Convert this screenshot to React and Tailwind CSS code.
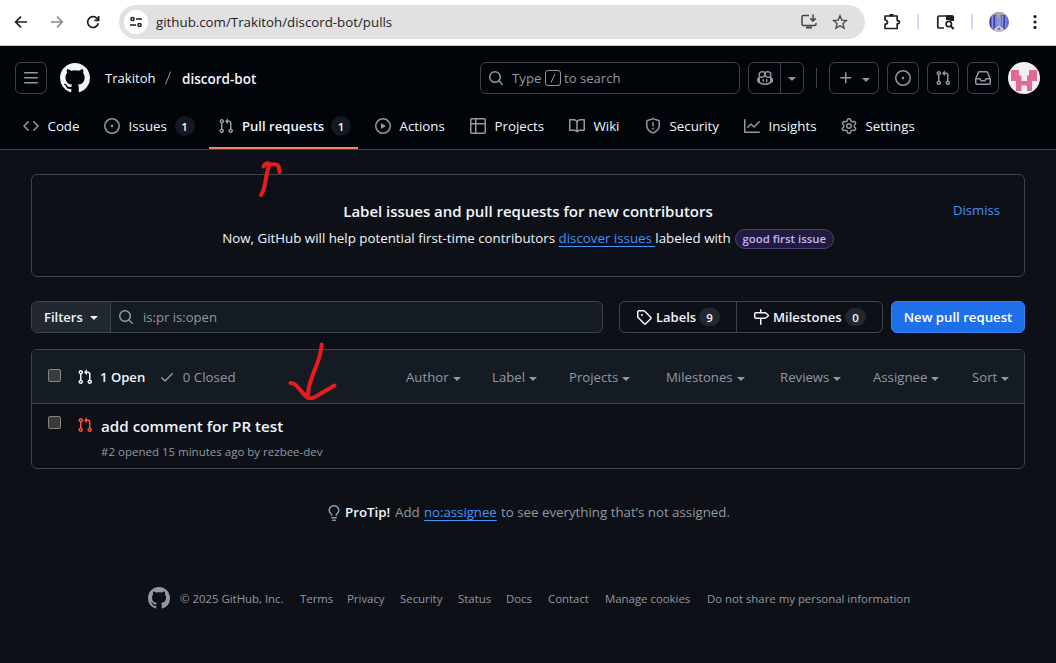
const ICONS = {
  bars: "M1 2.75A.75.75 0 0 1 1.75 2h12.5a.75.75 0 0 1 0 1.5H1.75A.75.75 0 0 1 1 2.75Zm0 5A.75.75 0 0 1 1.75 7h12.5a.75.75 0 0 1 0 1.5H1.75A.75.75 0 0 1 1 7.75ZM1.75 12h12.5a.75.75 0 0 1 0 1.5H1.75a.75.75 0 0 1 0-1.5Z",
  github: "M8 0c4.42 0 8 3.58 8 8a8.013 8.013 0 0 1-5.45 7.59c-.4.08-.55-.17-.55-.38 0-.27.01-1.13.01-2.2 0-.75-.25-1.23-.54-1.48 1.78-.2 3.65-.88 3.65-3.95 0-.88-.31-1.59-.82-2.15.08-.2.36-1.02-.08-2.12 0 0-.67-.22-2.2.82-.64-.18-1.32-.27-2-.27-.68 0-1.36.09-2 .27-1.53-1.03-2.2-.82-2.2-.82-.44 1.1-.16 1.92-.08 2.12-.51.56-.82 1.28-.82 2.15 0 3.06 1.86 3.75 3.64 3.95-.23.2-.44.55-.51 1.07-.46.21-1.61.55-2.33-.66-.15-.24-.6-.83-1.23-.82-.67.01-.27.38.01.53.34.19.73.9.82 1.13.16.45.68 1.31 2.69.94 0 .67.01 1.3.01 1.49 0 .21-.15.45-.55.38A7.995 7.995 0 0 1 0 8c0-4.42 3.58-8 8-8Z",
  code: "m11.28 3.22 4.25 4.25a.75.75 0 0 1 0 1.06l-4.25 4.25a.749.749 0 0 1-1.275-.326.749.749 0 0 1 .215-.734L13.94 8l-3.72-3.72a.749.749 0 0 1 .326-1.275.749.749 0 0 1 .734.215Zm-6.56 0a.751.751 0 0 1 1.042.018.751.751 0 0 1 .018 1.042L2.06 8l3.72 3.72a.749.749 0 0 1-.326 1.275.749.749 0 0 1-.734-.215L.47 8.53a.75.75 0 0 1 0-1.06Z",
  issue: "M8 9.3a1.3 1.3 0 1 0 0-2.6 1.3 1.3 0 0 0 0 2.6Z M8 0a8 8 0 1 1 0 16A8 8 0 0 1 8 0ZM1.5 8a6.5 6.5 0 1 0 13 0 6.5 6.5 0 0 0-13 0Z",
  pr: "M1.5 3.25a2.25 2.25 0 1 1 3 2.122v5.256a2.251 2.251 0 1 1-1.5 0V5.372A2.25 2.25 0 0 1 1.5 3.25Zm5.677-.177L9.573.677A.25.25 0 0 1 10 .854V2.5h1A2.5 2.5 0 0 1 13.5 5v5.628a2.251 2.251 0 1 1-1.5 0V5a1 1 0 0 0-1-1h-1v1.646a.25.25 0 0 1-.427.177L7.177 3.427a.25.25 0 0 1 0-.354ZM3.75 2.5a.75.75 0 1 0 0 1.5.75.75 0 0 0 0-1.5Zm0 9.5a.75.75 0 1 0 0 1.5.75.75 0 0 0 0-1.5Zm8.25.75a.75.75 0 1 0 1.5 0 .75.75 0 0 0-1.5 0Z",
  play: "M8 0a8 8 0 1 1 0 16A8 8 0 0 1 8 0ZM1.5 8a6.5 6.5 0 1 0 13 0 6.5 6.5 0 0 0-13 0Zm4.879-2.773 4.264 2.559a.25.25 0 0 1 0 .428l-4.264 2.559A.25.25 0 0 1 6 10.559V5.442a.25.25 0 0 1 .379-.215Z",
  table: "M0 1.75C0 .784.784 0 1.75 0h12.5C15.216 0 16 .784 16 1.75v12.5A1.75 1.75 0 0 1 14.25 16H1.75A1.75 1.75 0 0 1 0 14.25ZM6.5 6.5v8h7.75a.25.25 0 0 0 .25-.25V6.5Zm8-1.5V1.75a.25.25 0 0 0-.25-.25H6.5V5Zm-13 1.5v7.75c0 .138.112.25.25.25H5v-8ZM5 5V1.5H1.75a.25.25 0 0 0-.25.25V5Z",
  book: "M0 1.75A.75.75 0 0 1 .75 1h4.253c1.227 0 2.317.59 3 1.501A3.743 3.743 0 0 1 11.006 1h4.245a.75.75 0 0 1 .75.75v10.5a.75.75 0 0 1-.75.75h-4.507a2.25 2.25 0 0 0-1.591.659l-.622.621a.75.75 0 0 1-1.06 0l-.622-.621A2.25 2.25 0 0 0 5.258 13H.75a.75.75 0 0 1-.75-.75Zm7.251 10.324.004-5.073-.002-2.253A2.25 2.25 0 0 0 5.003 2.5H1.5v9h3.757a3.75 3.75 0 0 1 1.994.574ZM8.755 4.75l-.004 7.322a3.752 3.752 0 0 1 1.992-.572H14.5v-9h-3.495a2.25 2.25 0 0 0-2.25 2.25Z",
  shield: "M7.467.133a1.748 1.748 0 0 1 1.066 0l5.25 1.68A1.75 1.75 0 0 1 15 3.48V7c0 1.566-.32 3.182-1.303 4.682-.983 1.498-2.585 2.813-5.032 3.855a1.697 1.697 0 0 1-1.33 0c-2.447-1.042-4.049-2.357-5.032-3.855C1.32 10.182 1 8.566 1 7V3.48a1.75 1.75 0 0 1 1.217-1.667Zm.61 1.429a.25.25 0 0 0-.153 0l-5.25 1.68a.25.25 0 0 0-.174.238V7c0 1.358.275 2.666 1.057 3.86.784 1.194 2.121 2.34 4.366 3.297a.196.196 0 0 0 .154 0c2.245-.956 3.582-2.104 4.366-3.298C13.225 9.666 13.5 8.36 13.5 7V3.48a.251.251 0 0 0-.174-.237l-5.25-1.68ZM8.75 4.75v3a.75.75 0 0 1-1.5 0v-3a.75.75 0 0 1 1.5 0ZM9 10.5a1 1 0 1 1-2 0 1 1 0 0 1 2 0Z",
  graph: "M1.5 1.75V13.5h13.75a.75.75 0 0 1 0 1.5H.75a.75.75 0 0 1-.75-.75V1.75a.75.75 0 0 1 1.5 0Zm14.28 2.53-5.25 5.25a.75.75 0 0 1-1.06 0L7 7.06 4.28 9.78a.751.751 0 0 1-1.042-.018.751.751 0 0 1-.018-1.042l3.25-3.25a.75.75 0 0 1 1.06 0L10 7.94l4.72-4.72a.751.751 0 0 1 1.042.018.751.751 0 0 1 .018 1.042Z",
  gear: "M8 0a8.2 8.2 0 0 1 .701.031C9.444.095 9.99.645 10.16 1.29l.288 1.107c.018.066.079.158.212.224.231.114.454.243.668.386.123.082.233.09.299.071l1.103-.303c.644-.176 1.392.021 1.82.63.27.385.506.792.704 1.218.315.675.111 1.422-.364 1.891l-.814.806c-.049.048-.098.147-.088.294.016.257.016.515 0 .772-.01.147.038.246.088.294l.814.806c.475.469.679 1.216.364 1.891a7.977 7.977 0 0 1-.704 1.217c-.428.61-1.176.807-1.82.63l-1.102-.302c-.067-.019-.177-.011-.3.071a5.909 5.909 0 0 1-.668.386c-.133.066-.194.158-.211.224l-.29 1.106c-.168.646-.715 1.196-1.458 1.26a8.006 8.006 0 0 1-1.402 0c-.743-.064-1.289-.614-1.458-1.26l-.289-1.106c-.018-.066-.079-.158-.212-.224a5.738 5.738 0 0 1-.668-.386c-.123-.082-.233-.09-.299-.071l-1.103.303c-.644.176-1.392-.021-1.82-.63a8.12 8.12 0 0 1-.704-1.218c-.315-.675-.111-1.422.363-1.891l.815-.806c.05-.048.098-.147.088-.294a6.214 6.214 0 0 1 0-.772c.01-.147-.038-.246-.088-.294l-.815-.806C.635 6.045.431 5.298.746 4.623a7.92 7.92 0 0 1 .704-1.217c.428-.61 1.176-.807 1.82-.63l1.102.302c.067.019.177.011.3-.071.214-.143.437-.272.668-.386.133-.066.194-.158.211-.224l.29-1.106C6.009.645 6.556.095 7.299.03 7.53.01 7.764 0 8 0Zm-.571 1.525c-.036.003-.108.036-.137.146l-.289 1.105c-.147.561-.549.967-.998 1.189-.173.086-.34.183-.5.29-.417.278-.97.423-1.529.27l-1.103-.303c-.109-.03-.175.016-.195.045-.22.312-.412.644-.573.99-.014.031-.021.11.059.19l.815.806c.411.406.562.957.53 1.456a4.709 4.709 0 0 0 0 .582c.032.499-.119 1.05-.53 1.456l-.815.806c-.081.08-.073.159-.059.19.162.346.353.677.573.989.02.03.085.076.195.046l1.102-.303c.56-.153 1.113-.008 1.53.27.161.107.328.204.501.29.447.222.85.629.997 1.189l.289 1.105c.029.109.101.143.137.146a6.6 6.6 0 0 0 1.142 0c.036-.003.108-.036.137-.146l.289-1.105c.147-.561.549-.967.998-1.189.173-.086.34-.183.5-.29.417-.278.97-.423 1.529-.27l1.103.303c.109.029.175-.016.195-.045.22-.313.411-.644.573-.99.014-.031.021-.11-.059-.19l-.815-.806c-.411-.406-.562-.957-.53-1.456a4.709 4.709 0 0 0 0-.582c-.032-.499.119-1.05.53-1.456l.815-.806c.081-.08.073-.159.059-.19a6.464 6.464 0 0 0-.573-.989c-.02-.03-.085-.076-.195-.046l-1.102.303c-.56.153-1.113.008-1.53-.27a4.44 4.44 0 0 0-.501-.29c-.447-.222-.85-.629-.997-1.189l-.289-1.105c-.029-.11-.101-.143-.137-.146a6.6 6.6 0 0 0-1.142 0ZM11 8a3 3 0 1 1-6 0 3 3 0 0 1 6 0ZM9.5 8a1.5 1.5 0 1 0-3.001.001A1.5 1.5 0 0 0 9.5 8Z",
  inbox: "M2.8 2.06A1.75 1.75 0 0 1 4.41 1h7.18c.7 0 1.333.417 1.61 1.06l2.74 6.395c.04.093.06.194.06.295v4.5A1.75 1.75 0 0 1 14.25 15H1.75A1.75 1.75 0 0 1 0 13.25v-4.5c0-.101.02-.202.06-.295Zm1.61.44a.25.25 0 0 0-.23.152L1.887 8H4.75a.75.75 0 0 1 .6.3L6.625 10h2.75l1.275-1.7a.75.75 0 0 1 .6-.3h2.863L11.82 2.652a.25.25 0 0 0-.23-.152Zm10.09 7h-2.875l-1.275 1.7a.75.75 0 0 1-.6.3h-3.5a.75.75 0 0 1-.6-.3L4.375 9.5H1.5v3.75c0 .138.112.25.25.25h12.5a.25.25 0 0 0 .25-.25Z",
  search: "M10.68 11.74a6 6 0 0 1-7.922-8.982 6 6 0 0 1 8.982 7.922l3.04 3.04a.749.749 0 0 1-.326 1.275.749.749 0 0 1-.734-.215ZM11.5 7a4.499 4.499 0 1 0-8.997 0A4.499 4.499 0 0 0 11.5 7Z",
  plus: "M7.75 2a.75.75 0 0 1 .75.75V7h4.25a.75.75 0 0 1 0 1.5H8.5v4.25a.75.75 0 0 1-1.5 0V8.5H2.75a.75.75 0 0 1 0-1.5H7V2.75A.75.75 0 0 1 7.75 2Z",
  down: "m4.427 7.427 3.396 3.396a.25.25 0 0 0 .354 0l3.396-3.396A.25.25 0 0 0 11.396 7H4.604a.25.25 0 0 0-.177.427Z",
  tag: "M1 7.775V2.75C1 1.784 1.784 1 2.75 1h5.025c.464 0 .91.184 1.238.513l6.25 6.25a1.75 1.75 0 0 1 0 2.474l-5.026 5.026a1.75 1.75 0 0 1-2.474 0l-6.25-6.25A1.752 1.752 0 0 1 1 7.775Zm1.5 0c0 .066.026.13.073.177l6.25 6.25a.25.25 0 0 0 .354 0l5.025-5.025a.25.25 0 0 0 0-.354l-6.25-6.25a.25.25 0 0 0-.177-.073H2.75a.25.25 0 0 0-.25.25ZM6 5a1 1 0 1 1 0 2 1 1 0 0 1 0-2Z",
  milestone: "M7.75 0a.75.75 0 0 1 .75.75V3h3.634c.414 0 .814.147 1.13.414l2.07 1.75a1.75 1.75 0 0 1 0 2.672l-2.07 1.75a1.75 1.75 0 0 1-1.13.414H8.5v5.25a.75.75 0 0 1-1.5 0V10H2.75A1.75 1.75 0 0 1 1 8.25v-3.5C1 3.784 1.784 3 2.75 3H7V.75A.75.75 0 0 1 7.75 0Zm4.384 8.5a.25.25 0 0 0 .161-.06l2.07-1.75a.248.248 0 0 0 0-.38l-2.07-1.75a.25.25 0 0 0-.161-.06H2.75a.25.25 0 0 0-.25.25v3.5c0 .138.112.25.25.25h9.384Z",
  check: "M13.78 4.22a.75.75 0 0 1 0 1.06l-7.25 7.25a.75.75 0 0 1-1.06 0L2.22 9.28a.751.751 0 0 1 .018-1.042.751.751 0 0 1 1.042-.018L6 10.94l6.72-6.72a.75.75 0 0 1 1.06 0Z",
  bulb: "M8 1.5c-2.363 0-4 1.69-4 3.75 0 .984.424 1.625.984 2.304l.214.253c.223.264.47.556.673.848.284.411.537.896.621 1.49a.75.75 0 0 1-1.484.211c-.04-.282-.163-.547-.37-.847a8.456 8.456 0 0 0-.542-.68c-.084-.1-.173-.205-.268-.32C3.201 7.75 2.5 6.766 2.5 5.25 2.5 2.31 4.863 0 8 0s5.5 2.31 5.5 5.25c0 1.516-.701 2.5-1.328 3.259-.095.115-.184.22-.268.319-.207.245-.383.453-.541.681-.208.3-.33.565-.37.847a.751.751 0 0 1-1.485-.212c.084-.593.337-1.078.621-1.489.203-.292.45-.584.673-.848.075-.088.147-.173.213-.253.561-.679.985-1.32.985-2.304 0-2.06-1.637-3.75-4-3.75ZM5.75 12h4.5a.75.75 0 0 1 0 1.5h-4.5a.75.75 0 0 1 0-1.5ZM6 15.25a.75.75 0 0 1 .75-.75h2.5a.75.75 0 0 1 0 1.5h-2.5a.75.75 0 0 1-.75-.75Z",
  copilot: "M7.998 15.035c-4.562 0-7.873-2.914-7.998-3.749V9.338c.085-.628.677-1.686 1.588-2.065.013-.07.024-.143.036-.218.029-.183.06-.384.126-.612-.201-.508-.254-1.084-.254-1.656 0-.87.128-1.769.693-2.484.579-.733 1.494-1.124 2.724-1.261 1.206-.134 2.262.034 2.944.765.05.053.096.108.139.165.044-.057.094-.112.143-.165.682-.731 1.738-.899 2.944-.765 1.23.137 2.145.528 2.724 1.261.566.715.693 1.614.693 2.484 0 .572-.053 1.148-.254 1.656.066.228.098.429.126.612.012.076.024.148.037.218.924.385 1.522 1.471 1.591 2.095v1.872c0 .766-3.351 3.795-8.002 3.795Zm0-1.485c2.28 0 4.584-1.11 5.002-1.433V7.862l-.023-.116c-.49.21-1.075.291-1.727.291-1.146 0-2.059-.327-2.71-.991A3.222 3.222 0 0 1 8 6.303a3.24 3.24 0 0 1-.544.743c-.65.664-1.563.991-2.71.991-.652 0-1.236-.081-1.727-.291l-.023.116v4.255c.419.323 2.722 1.433 5.002 1.433ZM6.762 2.83c-.193-.206-.637-.413-1.682-.297-1.019.113-1.479.404-1.713.7-.247.312-.369.789-.369 1.554 0 .793.129 1.171.308 1.371.162.181.519.379 1.442.379.853 0 1.339-.235 1.638-.54.315-.322.527-.827.617-1.553.117-.935-.037-1.395-.241-1.614Zm4.155-.297c-1.044-.116-1.488.091-1.681.297-.204.219-.359.679-.242 1.614.091.726.303 1.231.618 1.553.299.305.784.54 1.638.54.922 0 1.28-.198 1.442-.379.179-.2.308-.578.308-1.371 0-.765-.123-1.242-.37-1.554-.233-.296-.693-.587-1.713-.7Z M6.25 9.037a.75.75 0 0 1 .75.75v1.501a.75.75 0 0 1-1.5 0V9.787a.75.75 0 0 1 .75-.75Zm4.25.75v1.501a.75.75 0 0 1-1.5 0V9.787a.75.75 0 0 1 1.5 0Z",
};

function Icon({ name, className = "size-4" }) {
  return (
    <svg viewBox="0 0 16 16" fill="currentColor" className={`shrink-0 ${className}`}>
      <path d={ICONS[name]} />
    </svg>
  );
}

function Line({ children, className = "", viewBox = "0 0 16 16" }) {
  return (
    <svg viewBox={viewBox} fill="none" stroke="currentColor" className={`shrink-0 ${className}`}>
      {children}
    </svg>
  );
}

function BrowserBar() {
  return (
    <div className="flex h-[46px] items-center border-b border-[#c9c9c9] bg-white pb-px text-[#1f1f1f]">
      <Line className="ml-[13px] size-4">
        <path strokeWidth="1.7" d="M14 8H2.6M8 2.6 2.6 8 8 13.4" />
      </Line>
      <Line className="ml-5 size-4 text-[#8a8a8a]">
        <path strokeWidth="1.5" d="M2 8h11.4M8 2.6 13.4 8 8 13.4" />
      </Line>
      <Line className="ml-5 size-4">
        <path strokeWidth="1.7" d="M13.3 9.2A5.4 5.4 0 1 1 12 4.4L13.5 6" />
        <path strokeWidth="1.7" d="M13.6 2v4.3H9.4" />
      </Line>
      <div className="ml-[18px] flex h-[34px] w-[746px] items-center rounded-full bg-[#e1e1e1] pl-[5px]">
        <div className="flex size-6 items-center justify-center rounded-full bg-white">
          <Line className="size-3.5" viewBox="0 0 14 14">
            <circle cx="3.5" cy="4" r="1.6" strokeWidth="1.5" />
            <circle cx="10.5" cy="10" r="1.6" strokeWidth="1.5" />
            <path strokeWidth="1.5" d="M7 4h6M1 10h6" />
          </Line>
        </div>
        <span className="ml-2 w-[644px] whitespace-nowrap pt-0.5 text-[13.300px]">github.com/Trakitoh/discord-bot/pulls</span>
        <Line className="size-[18px] text-[#444]" viewBox="0 0 18 18">
          <path strokeWidth="1.5" d="M9 2.5H3.3q-1.300 0-1.300 1.300v7.400q0 1.300 1.300 1.300h11.400q1.300 0 1.300-1.300V10M13 1.5v6.4M10.3 5.4 13 8l2.7-2.6" />
          <path strokeWidth="2" d="M6 14.5h6" />
        </Line>
        <Line className="ml-[14px] size-4 text-[#444]">
          <path strokeWidth="1.3" d="m8 1.8 1.8 4.3 4.7.4-3.6 3.1 1.1 4.6L8 11.7l-4 2.5 1.1-4.6L1.5 6.5l4.7-.4z" />
        </Line>
      </div>
      <Line className="ml-[17px] size-5" viewBox="0 0 20 20">
        <path strokeWidth="1.7" strokeLinejoin="round" d="M3 4h12.2v4.6q2.200 0 2.200 1.600t-2.200 1.600v4.700H3v-4.100q2.500-.5 2.500-2.200T3 8Z" />
        <path strokeWidth="2.4" d="M7.5 3.200h4" />
      </Line>
      <div className="ml-[15px] h-4 w-0.5 rounded bg-[#e2d0fb]" />
      <Line className="ml-4 size-5" viewBox="0 0 20 20">
        <path strokeWidth="1.7" d="M9 16H4.2Q2.8 16 2.8 14.6V5.4Q2.8 4 4.2 4h12.600q1.400 0 1.400 1.300V9" />
        <path fill="currentColor" strokeWidth="0" d="M11 3.200h6q2 0 2 2V9h-3l-2-1h-3Z" />
        <circle cx="13.8" cy="12" r="2.7" strokeWidth="1.7" />
        <path strokeWidth="1.9" d="m15.700 14 3 3" />
      </Line>
      <div className="ml-[16px] h-4 w-0.5 rounded bg-[#e2d0fb]" />
      <svg viewBox="0 0 20 20" className="ml-4 size-5 shrink-0">
        <clipPath id="profile"><circle cx="10" cy="10" r="10" /></clipPath>
        <g clipPath="url(#profile)">
          <path fill="#6a66c4" d="M0 0h20v20H0z" />
          <path stroke="#8f92f0" strokeWidth="1.2" d="M3.500 3v13M7 4v10M13.500 4v10M17 3v13" />
          <path stroke="#403d8c" strokeWidth="1.2" d="M5.200 2v14M15.200 2v14M1.500 5v11" />
          <path fill="#a4a5c4" d="M3 0h14v3H3z" />
          <path fill="#7f9be0" d="M8 6h4v7H8z" />
          <path fill="#b9b83c" d="M8 1h3.500v5H8z" />
          <path fill="#c8c8dc" d="m4 20 2-4 4-3 4 3 2 4z" />
          <path fill="#77799a" d="m8 18 2-3 2 3z" />
        </g>
      </svg>
      <svg viewBox="0 0 4 16" className="ml-6 h-4 w-1" fill="currentColor">
        <circle cx="2" cy="2.600" r="1.600" /><circle cx="2" cy="8" r="1.600" /><circle cx="2" cy="13.400" r="1.600" />
      </svg>
    </div>
  );
}

function Avatar() {
  return (
    <svg viewBox="0 0 32 32" className="ml-[9px] size-8 shrink-0">
      <circle cx="16" cy="16" r="16" fill="#f0f0f0" />
      <path fill="#dd6b93" d="M3 8h5v5.500h5.500v5.500h5.500v-5.500H24V8h5v11h-5v10h-5v-5.500h-5.500V29H8V19H3z" />
      <path fill="#dd6b93" d="M8 8h3v6H8zM21 8h3v6h-3z" />
    </svg>
  );
}

const box = "flex h-8 shrink-0 items-center rounded-md border border-[#3d444d]";

function TopBar() {
  return (
    <div className="flex h-16 items-center pl-[15px] text-[#9198a1]">
      <div className={`${box} w-8 justify-center`}><Icon name="bars" /></div>
      <Icon name="github" className="ml-[13px] size-[30px] text-[#f0f6fc]" />
      <span className="ml-[15px] w-[60px] whitespace-nowrap pt-0.5 text-[13.1px] text-[#f0f6fc]">Trakitoh</span>
      <svg viewBox="0 0 6 14" className="h-3.5 w-1.5" stroke="currentColor"><path d="M5.5.5.5 13.500" /></svg>
      <span className="ml-[11px] w-[298px] whitespace-nowrap pt-0.5 text-[13.5px] font-semibold text-[#f0f6fc]">discord-bot</span>
      <div className={`${box} w-[260px] pl-[7px] text-[13.3px]`}>
        <Icon name="search" />
        <span className="ml-2 w-[33px] pt-0.5">Type</span>
        <svg viewBox="0 0 16 16" className="size-4" fill="none" stroke="currentColor">
          <rect x=".5" y=".5" width="15" height="15" rx="2.5" /><path d="M10 4 6 12.5" />
        </svg>
        <span className="ml-[3px] pt-0.5 text-[13.1px]">to search</span>
      </div>
      <div className={`${box} ml-2 w-14`}>
        <span className="flex h-full w-8 items-center justify-center border-r border-[#3d444d]"><Icon name="copilot" /></span>
        <span className="flex flex-1 justify-center"><Icon name="down" /></span>
      </div>
      <div className="ml-3 h-5 w-px bg-[#3d444d]" />
      <div className={`${box} ml-3 w-[50px] pl-2`}><Icon name="plus" /><Icon name="down" className="mt-0.5 ml-1 size-4" /></div>
      <div className={`${box} ml-2 w-8 justify-center`}><Icon name="issue" /></div>
      <div className={`${box} ml-2 w-8 justify-center`}><Icon name="pr" /></div>
      <div className={`${box} ml-2 w-8 justify-center`}><Icon name="inbox" /></div>
      <Avatar />
    </div>
  );
}

const TABS = [
  { icon: "code", label: "Code", width: "w-[81px]" },
  { icon: "issue", label: "Issues", width: "w-[114px]", count: 1, text: "w-[46px]" },
  { icon: "pr", label: "Pull requests", width: "w-[157px]", count: 1, text: "w-[89px]", active: true },
  { icon: "play", label: "Actions", width: "w-[95px]" },
  { icon: "table", label: "Projects", width: "w-[99px]" },
  { icon: "book", label: "Wiki", width: "w-[76px]" },
  { icon: "shield", label: "Security", width: "w-[99px]" },
  { icon: "graph", label: "Insights", width: "w-[97px]" },
  { icon: "gear", label: "Settings", width: "w-[90px]" },
];

function Tabs() {
  return (
    <nav className="flex h-[39px] pl-[23px]">
      {TABS.map((t) => (
        <div key={t.label} className={`relative flex h-8 shrink-0 items-center ${t.width}`}>
          <Icon name={t.icon} className="size-4 text-[#9198a1]" />
          <span className={`whitespace-nowrap pt-0.5 text-[#f0f6fc] ${t.text || ""} ${t.active ? "ml-2 text-[13.100px] font-semibold" : "ml-[8.500px] text-[13.300px]"}`}>{t.label}</span>
          {t.count && <span className="flex size-5 items-center justify-center rounded-full bg-[#15191f] pt-px text-[11.500px] font-semibold text-[#f0f6fc]">{t.count}</span>}
          {t.active && <span className="absolute top-[37px] -left-[9px] h-0.5 w-[149px] bg-[#f78166]" />}
        </div>
      ))}
    </nav>
  );
}

function Banner() {
  return (
    <section className="relative mx-[31px] mt-6 h-[103px] rounded-md border border-[#3d444d] pt-6 text-center text-[#f0f6fc]">
      <h2 className="text-[15px] leading-6 font-semibold tracking-[-0.02px]">Label issues and pull requests for new contributors</h2>
      <p className="mt-1 flex h-6 items-center justify-center whitespace-nowrap text-[13.320px]">
        Now, GitHub will help potential first-time contributors&nbsp;
        <a className="text-[#4493f8] underline underline-offset-[3px]">discover issues&nbsp;</a>
        labeled with
        <span className="-mt-px ml-1 flex h-5 w-[99px] items-center justify-center rounded-full border border-[#4c4179] bg-[#211b3f] pt-px text-[11.400px] font-semibold text-[#c5b3fd]">good first issue</span>
      </p>
      <a className="absolute top-[25px] right-6 text-[13.100px] leading-5 text-[#4493f8]">Dismiss</a>
    </section>
  );
}

function Count({ children }) {
  return <span className="ml-1 flex h-[18px] w-[21px] items-center justify-center rounded-full bg-[#212830] pt-px text-[11.500px]">{children}</span>;
}

function Toolbar() {
  return (
    <div className="mx-[31px] mt-6 flex h-8 text-[13.200px] font-semibold text-[#f0f6fc]">
      <div className="flex w-[572px] items-center overflow-hidden rounded-md border border-[#3d444d] bg-[#151b23]">
        <span className="flex h-full w-[79px] items-center border-r border-[#3d444d] bg-[#212830] pl-3">
          <span className="w-[42px] pt-0.5 text-[13px]">Filters</span><Icon name="down" />
        </span>
        <Icon name="search" className="ml-[7px] size-4 text-[#9198a1]" />
        <span className="ml-[9px] pt-0.5 text-[13.100px] font-normal text-[#9198a1]">is:pr is:open</span>
      </div>
      <div className="ml-4 flex w-[264px] items-center rounded-md border border-[#3d444d]">
        <span className="flex h-full w-[117px] items-center border-r border-[#3d444d] pl-4">
          <Icon name="tag" /><span className="ml-1 w-[39px] pt-0.5 text-[13px]">Labels</span><Count>9</Count>
        </span>
        <span className="flex items-center pl-4">
          <Icon name="milestone" /><span className="ml-1 w-[68px] pt-0.5 text-[13.100px]">Milestones</span><Count>0</Count>
        </span>
      </div>
      <button className="ml-2 flex w-[134px] items-center justify-center whitespace-nowrap rounded-md border border-[#3c82f0] bg-[#1f6feb] pt-0.5 text-white">New pull request</button>
    </div>
  );
}

const MENUS = [
  ["Author", "w-[86px]"],
  ["Label", "w-[77px]"],
  ["Projects", "w-[97px]"],
  ["Milestones", "w-[114px]"],
  ["Reviews", "w-[93px]"],
  ["Assignee", "w-[99px]"],
  ["Sort", "w-[52px]"],
];

function Checkbox({ className = "" }) {
  return <span className={`size-[13px] shrink-0 rounded-[2px] border border-[#858585] bg-[#3b3b3b] ${className}`} />;
}

function PullList() {
  return (
    <section className="mx-[31px] mt-4 h-[120px] overflow-hidden rounded-md border border-[#3d444d] text-[13.200px] text-[#9198a1]">
      <header className="flex h-[54px] items-center border-b border-[#3d444d] bg-[#151b23] pl-4 whitespace-nowrap">
        <Checkbox className="-mt-[3px]" />
        <Icon name="pr" className="mt-px ml-4 size-4 text-[#f0f6fc]" />
        <span className="ml-[7px] w-[59px] pt-0.5 text-[13.100px] font-semibold text-[#f0f6fc]">1 Open</span>
        <Icon name="check" className="mt-px size-4" />
        <span className="ml-2 w-[224px] pt-0.5 text-[13.300px]">0 Closed</span>
        {MENUS.map(([label, width]) => (
          <span key={label} className={`flex shrink-0 items-center pt-0.5 ${width}`}>
            {label}
            <svg viewBox="0 0 8 4" className="mt-1 ml-1 h-1 w-2" fill="currentColor"><path d="M0 0h8L4 4z" /></svg>
          </span>
        ))}
      </header>
      <div className="flex h-16 pl-4">
        <Checkbox className="mt-3" />
        <Icon name="pr" className="mt-[13px] ml-4 size-4 text-[#f85149]" />
        <div className="ml-2 pt-2.5">
          <h3 className="text-[15.200px] leading-6 font-semibold text-[#f0f6fc]">add comment for PR test</h3>
          <p className="mt-[5px] text-[11.500px] leading-[18px]">#2 opened 15 minutes ago by rezbee-dev</p>
        </div>
      </div>
    </section>
  );
}

const LINKS = [
  ["© 2025 GitHub, Inc.", "w-[120px]"],
  ["Terms", "w-[47px]"],
  ["Privacy", "w-[53px]"],
  ["Security", "w-[58px]"],
  ["Status", "w-12"],
  ["Docs", "w-[42px]"],
  ["Contact", "w-[57px]"],
  ["Manage cookies", "w-[102px]"],
  ["Do not share my personal information", "w-[210px]"],
];

function Marks() {
  return (
    <svg viewBox="0 0 1056 663" className="pointer-events-none absolute inset-0 h-[663px] w-[1056px]" fill="none" stroke="#e81b1f" strokeWidth="4" strokeLinecap="round" strokeLinejoin="round">
      <path d="M261 195C264.500 190 265 184 266 178C266.500 173 268.500 169 269 164.500M263.500 166.500C265 164 267 163 268.500 163.500C270 165.500 277 162.500 278.700 166.500L279.500 172" />
      <path d="M321.700 344.500C321 358 315 368 311.700 378C308.500 386 308 391 307.500 397M290.500 383C296 383 297 387 306 396.500C309 399 312 399 316 396.500L334.500 385.500" />
    </svg>
  );
}

export default function App() {
  return (
    <div className="relative h-[663px] w-[1056px] overflow-hidden bg-[#0d1117] font-['Open_Sans','Noto_Sans',sans-serif]">
      <BrowserBar />
      <div className="h-[104px] border-b border-[#3d444d] bg-[#010409]">
        <TopBar />
        <Tabs />
      </div>
      <Banner />
      <Toolbar />
      <PullList />
      <p className="mt-[34px] flex h-5 items-center pl-[326px] whitespace-nowrap text-[13.300px] text-[#9198a1]">
        <Icon name="bulb" />
        <span className="ml-[3px] w-[50px] font-semibold text-[#f0f6fc]">ProTip!</span>
        <span className="w-[29px]">Add</span>
        <a className="w-[77px] text-[13.200px] text-[#4493f8] underline underline-offset-[3px]">no:assignee</a>
        <span>to see everything that’s not assigned.</span>
      </p>
      <footer className="mt-[63px] flex h-6 items-center pl-[148px] whitespace-nowrap text-[11.400px] text-[#9198a1]">
        <Icon name="github" className="mr-2.5 size-[22px]" />
        {LINKS.map(([label, width]) => <span key={label} className={`shrink-0 pt-0.5 ${width}`}>{label}</span>)}
      </footer>
      <Marks />
    </div>
  );
}
